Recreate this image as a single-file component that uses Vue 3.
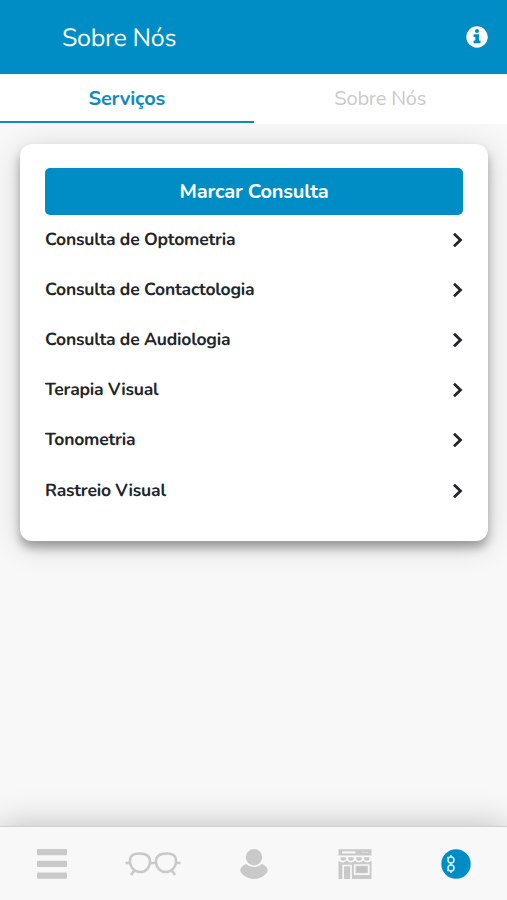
<script setup>
const services = [
  'Consulta de Optometria',
  'Consulta de Contactologia',
  'Consulta de Audiologia',
  'Terapia Visual',
  'Tonometria',
  'Rastreio Visual',
]
</script>

<template>
  <div class="screen">
    <header class="topbar">
      <h1>Sobre Nós</h1>
      <svg class="info" viewBox="0 0 22 22">
        <circle cx="11" cy="11" r="10.7" fill="#fff" />
        <circle cx="11" cy="4.900" r="2" fill="#008dc5" />
        <path d="M7.600 8.300h5.400v6.200h1.500v2.700H7.600v-2.700h1.700V11H7.600z" fill="#008dc5" />
      </svg>
    </header>

    <nav class="tabs">
      <button class="tab active">Serviços</button>
      <button class="tab">Sobre Nós</button>
    </nav>

    <main class="content">
      <section class="card">
        <button class="book">Marcar Consulta</button>
        <ul>
          <li v-for="name in services" :key="name">
            <span class="label">{{ name }}</span>
            <svg class="chevron" viewBox="0 0 11 16">
              <path d="M2 1.700 8.500 8 2 14.300" fill="none" stroke="#212529" stroke-width="2.800" />
            </svg>
          </li>
        </ul>
      </section>
    </main>

    <footer class="bottombar">
      <a>
        <svg width="30" height="30" viewBox="0 0 30 30" fill="#c9c9c9">
          <rect width="30" height="6.2" rx="1" />
          <rect y="11.8" width="30" height="6.2" rx="1" />
          <rect y="23.6" width="30" height="6.2" rx="1" />
        </svg>
      </a>
      <a>
        <svg width="56" height="26" viewBox="0 0 56 26" fill="none" stroke="#c9c9c9" stroke-width="2.5">
          <path d="M5 8.500C5.300 4 9 2.500 14.500 2.500c6.500 0 10.500 2.500 10.500 8.300 0 5.700-4.200 10.200-10 10.200S4.500 16 5 8.500Z" />
          <path d="M51 8.500C50.700 4 47 2.500 41.500 2.500c-6.500 0-10.500 2.500-10.500 8.300 0 5.700 4.200 10.200 10 10.200S51.500 16 51 8.500Z" />
          <path d="M25 12h6M.5 12H5M51 12h4.500M9.500 19 6 24M46.500 19l3.500 5" />
        </svg>
      </a>
      <a>
        <svg width="28" height="30" viewBox="0 0 28 30" fill="#c9c9c9">
          <path d="M6.500 15C3 16 .3 18.500.3 21.500.3 24 6 30 14 30s13.700-6 13.700-8.500c0-3-2.700-5.500-6.200-6.500-2 2.200-4.500 3-7.500 3S8.500 17.200 6.500 15Z" />
          <circle cx="14" cy="8.300" r="8.200" />
        </svg>
      </a>
      <a>
        <svg width="34" height="30" viewBox="0 0 34 30">
          <path d="M.5.300h33v6.200H.5z" fill="#c9c9c9" />
          <path d="M4 2.400h13.500v2H4z" fill="#f8f8f8" />
          <path d="M24 3.400h6" stroke="#dedede" />
          <path d="M2.500 8.300h5.400v1a2.700 2.500 0 0 1-5.400 0zM10.300 8.300h5.400v1a2.700 2.500 0 0 1-5.400 0zM18.300 8.300h5.400v1a2.700 2.500 0 0 1-5.400 0zM26.100 8.300h5.400v1a2.700 2.500 0 0 1-5.400 0z" fill="#c9c9c9" />
          <path d="M.5 11.500q4 4 8.300 0 4.200 4 8.200 0 4.200 4 8.200 0 4.300 4 8.300 0V30H.5z" fill="#c9c9c9" />
          <path d="M5.200 30V16.500h7.800v14M16.700 16h14v9.200h-14z" fill="#c9c9c9" stroke="#f8f8f8" stroke-width="1.700" />
          <path d="M19 18.200h9.400v4.800H19z" fill="#c2c2c2" />
        </svg>
      </a>
      <a>
        <svg width="30" height="30" viewBox="0 0 30 30">
          <circle cx="15" cy="15" r="14.700" fill="#008dc5" />
          <g fill="none" stroke="#d9f3fb" stroke-width="1.500">
            <circle cx="10" cy="11" r="3" />
            <circle cx="10" cy="19" r="3" />
            <path d="M10 14v2M10 8V6M10 22v2M7.500 9 6.500 8M7.500 21l-1 1" />
          </g>
        </svg>
      </a>
    </footer>
  </div>
</template>

<style>
body {
  margin: 0;
}
</style>

<style scoped>
.screen {
  display: flex;
  flex-direction: column;
  height: 900px;
  overflow: hidden;
  background: #f8f8f8;
  color: #212529;
  font-family: Nunito, Lato, sans-serif;
  text-rendering: geometricPrecision;
}
.topbar {
  display: flex;
  align-items: center;
  justify-content: space-between;
  box-sizing: border-box;
  height: 74px;
  padding: 0 19px 0 62px;
  background: #008dc5;
}
h1 {
  margin: 0;
  padding-top: 1px;
  color: #fff;
  font-size: 25px;
  font-weight: 400;
  line-height: 34px;
  letter-spacing: -0.3px;
}
.info {
  width: 22px;
  height: 22px;
}
button {
  padding: 0;
  border: 0;
  font: inherit;
}
.tabs {
  display: grid;
  grid-template-columns: 1fr 1fr;
  height: 50px;
}
.tab {
  padding-bottom: 1px;
  background: #fff;
  color: #cacaca;
  font-size: 20px;
  letter-spacing: -0.18px;
}
.tab.active {
  background: linear-gradient(#118bbf, #118bbf) 0 47px / 100% 2px no-repeat #fff;
  color: #118bbf;
  font-weight: 700;
}
.content {
  flex: 1;
  padding: 20px 19px 0 20px;
}
.card {
  box-sizing: border-box;
  height: 397px;
  padding: 24px 25px;
  border-radius: 12px;
  background: #fff;
  box-shadow: 0 7px 10px rgba(0, 0, 0, 0.3), 0 5px 30px rgba(0, 0, 0, 0.17);
}
.book {
  display: block;
  width: 100%;
  height: 47px;
  padding-bottom: 1px;
  border-radius: 5px;
  background: #008dc5;
  color: #fff;
  font-size: 20px;
  font-weight: 700;
  letter-spacing: -0.2px;
}
ul {
  margin: 0;
  padding: 0;
  list-style: none;
}
li {
  display: flex;
  align-items: center;
  justify-content: space-between;
  height: 50.1px;
}
.label {
  font-size: 17.5px;
  font-weight: 700;
  letter-spacing: -0.2px;
}
.chevron {
  width: 11px;
  height: 16px;
}
.bottombar {
  position: relative;
  display: grid;
  grid-template-columns: repeat(5, 101px);
  justify-content: center;
  align-items: center;
  box-sizing: border-box;
  height: 74px;
  border-top: 1px solid #cfcfcf;
  background: #f8f8f8;
  box-shadow: 0 0 34px rgba(0, 0, 0, 0.25);
}
.bottombar a {
  display: flex;
  justify-content: center;
}
</style>
